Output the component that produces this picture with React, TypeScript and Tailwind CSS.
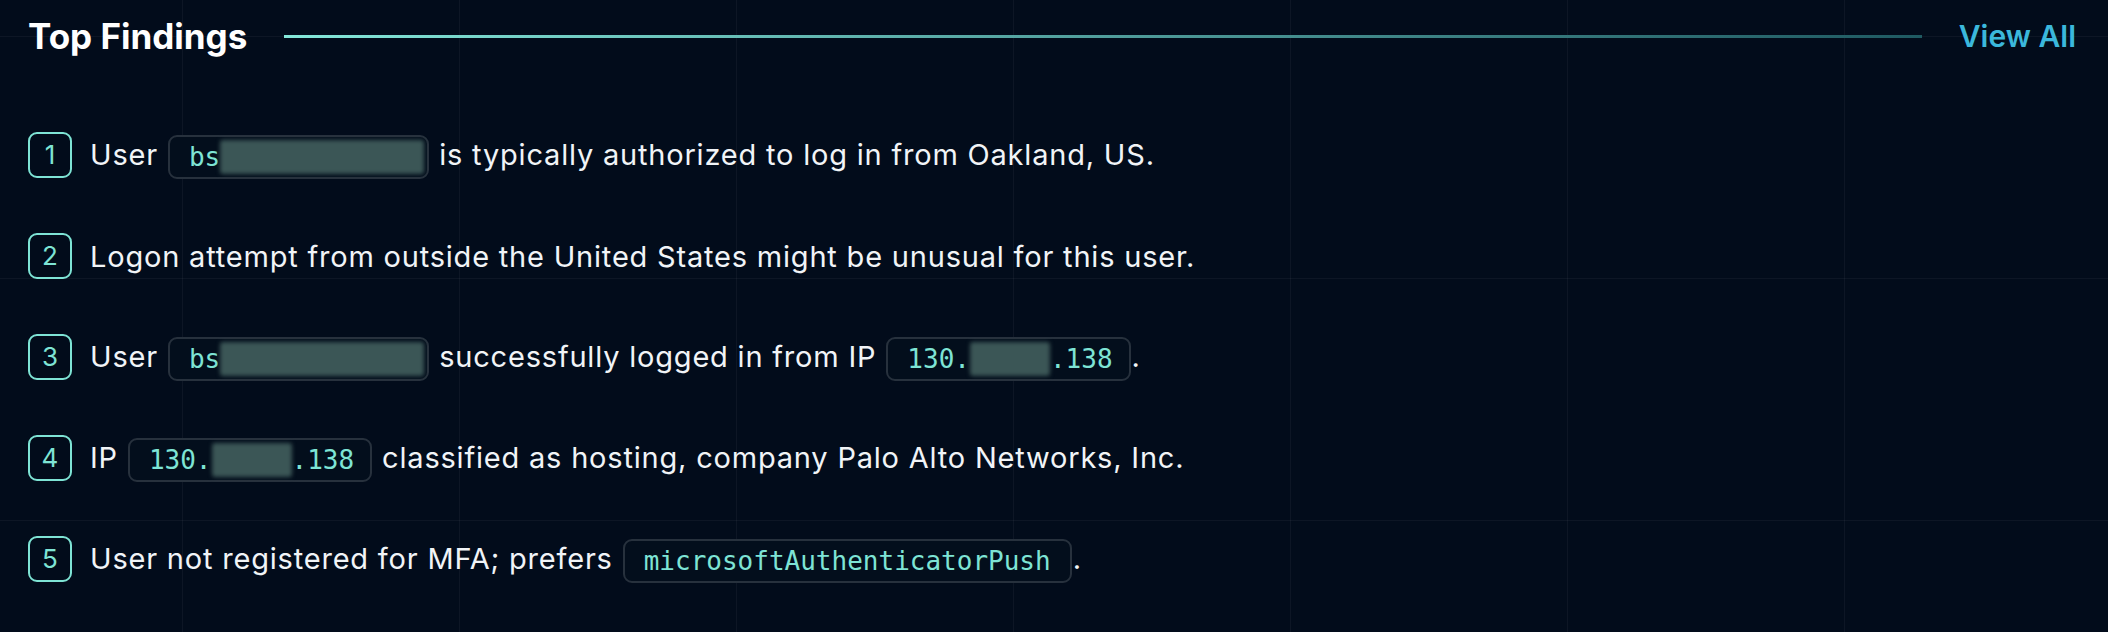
import React from "react";

const Badge = ({ n }: { n: number }) => (
  <div className="flex h-[46px] w-[44px] shrink-0 items-center justify-center rounded-[9px] border-2 border-[#7ee4d5] text-[26px] leading-none text-[#7ee4d5]">
    {n}
  </div>
);

const Blur = ({ w }: { w: number }) => (
  <span
    className="inline-block h-[34px] rounded-[3px] bg-[#3b5656] blur-[2px]"
    style={{ width: w }}
  />
);

const Pill = ({ children, pr = 19 }: { children: React.ReactNode; pr?: number }) => (
  <span
    className="mx-[1px] inline-flex h-[44px] items-center rounded-[9px] border-2 border-[#27313d] bg-[#030e1c] pl-[19px] align-middle font-['DejaVu_Sans_Mono',monospace] text-[26px] leading-none tracking-normal text-[#7ee4d5]"
    style={{ paddingRight: pr }}
  >
    {children}
  </span>
);

const Row = ({ n, children }: { n: number; children: React.ReactNode }) => (
  <div className="flex h-[46px] items-center gap-[18px]">
    <Badge n={n} />
    <div className="whitespace-nowrap pt-[1px] text-[29px] leading-[46px] tracking-[0.8px] text-[#f1f4f7]">{children}</div>
  </div>
);

export default function App() {
  return (
    <div className="h-[632px] w-full overflow-hidden bg-[#020c1b] bg-[linear-gradient(to_right,rgba(255,255,255,0.045)_1px,transparent_1px),linear-gradient(to_bottom,rgba(255,255,255,0.045)_1px,transparent_1px)] bg-[size:277px_242px] bg-[position:182px_36px] font-['Inter',sans-serif]">
      <div className="flex h-[72px] items-center pl-[28px] pr-[32px]">
        <h2 className="text-[35px] font-bold leading-none text-white">Top Findings</h2>
        <div className="mx-[37px] h-[3px] flex-1 bg-gradient-to-r from-[#84e8da] to-[#1f5a62]" />
        <span className="text-[30px] font-semibold leading-none text-[#3bb8dc]">View All</span>
      </div>
      <div className="flex flex-col gap-[55px] pl-[28px] pt-[60px]">
        <Row n={1}>
          User{" "}
          <Pill pr={3}>
            bs
            <Blur w={204} />
          </Pill>{" "}
          is typically authorized to log in from Oakland, US.
        </Row>
        <Row n={2}>Logon attempt from outside the United States might be unusual for this user.</Row>
        <Row n={3}>
          User{" "}
          <Pill pr={3}>
            bs
            <Blur w={204} />
          </Pill>{" "}
          successfully logged in from IP{" "}
          <Pill pr={16}>
            130.
            <Blur w={80} />
            .138
          </Pill>
          .
        </Row>
        <Row n={4}>
          IP{" "}
          <Pill pr={16}>
            130.
            <Blur w={80} />
            .138
          </Pill>{" "}
          classified as hosting, company Palo Alto Networks, Inc.
        </Row>
        <Row n={5}>
          User not registered for MFA; prefers <Pill>microsoftAuthenticatorPush</Pill>.
        </Row>
      </div>
    </div>
  );
}
